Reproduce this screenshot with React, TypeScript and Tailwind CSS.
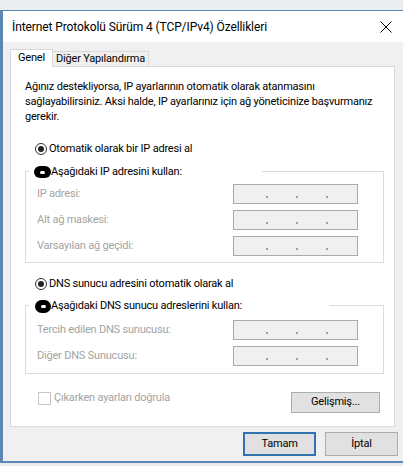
import React from "react";

const font = { fontFamily: 'Roboto, "Noto Sans", sans-serif' };

const IpBox = () => (
    <div className="w-[125px] h-[20px] bg-[#f0f0f0] border border-[#a9a9a9] flex items-end pb-[5px]">
        <div className="w-[2px] h-[2px] bg-[#a0a0a0] ml-[32px]" />
        <div className="w-[2px] h-[2px] bg-[#a0a0a0] ml-[28px]" />
        <div className="w-[2px] h-[2px] bg-[#a0a0a0] ml-[28px]" />
    </div>
);

const FieldRow = ({ label }: { label: string }) => (
    <div className="flex items-center h-[20px]">
        <div className="w-[196px] text-[#a3a3a3] whitespace-nowrap">{label}</div>
        <IpBox />
    </div>
);

const Blob = () => (
    <div className="w-[17px] h-[12px] rounded-full bg-black flex items-center justify-center shrink-0">
        <div className="w-[5px] h-[3px] rounded-full bg-white" />
    </div>
);

const Radio = ({ label }: { label: string }) => (
    <div className="flex items-center h-[16px] ml-[24px]">
        <div className="w-[12px] h-[12px] rounded-full border border-[#333] bg-white flex items-center justify-center">
            <div className="w-[6px] h-[6px] rounded-full bg-[#222]" />
        </div>
        <span className="ml-[2px] text-black whitespace-nowrap">{label}</span>
    </div>
);

const App = () => {
    return (
        <div
            className="w-[403px] h-[466px] bg-[#e8ebee] overflow-hidden text-[11px] tracking-[-0.2px]"
            style={font}
        >
            <div className="h-[10px] bg-[#eaedf0]" />
            <div className="h-[453px] bg-[#f0f0f0] border-t border-b-2 border-l-[3px] border-[#5b87b3] flex flex-col">
                {/* title bar */}
                <div className="h-[31px] bg-white flex items-center justify-between pl-[9px] pr-[10px] shrink-0">
                    <span className="text-[12px] tracking-[-0.1px] text-black whitespace-nowrap">
                        İnternet Protokolü Sürüm 4 (TCP/IPv4) Özellikleri
                    </span>
                    <svg width="12" height="12" viewBox="0 0 12 12" className="mr-[1px]">
                        <path d="M0.5 0.5 L11.5 11.5 M11.5 0.5 L0.5 11.5" stroke="#000" strokeWidth="1" />
                    </svg>
                </div>

                {/* tabs */}
                <div className="flex items-end h-[17px] mt-[7px] ml-[7px] relative z-10 whitespace-nowrap">
                    <div className="w-[43px] h-[18px] -mb-px bg-white border border-b-0 border-[#d9d9d9] flex items-center justify-center text-black">
                        Genel
                    </div>
                    <div className="w-[96px] h-[15px] bg-[#f0f0f0] border border-l-0 border-b-0 border-[#d9d9d9] flex items-center justify-center text-black">
                        Diğer Yapılandırma
                    </div>
                </div>

                {/* panel */}
                <div className="ml-[7px] w-[385px] h-[361px] bg-white border border-[#d9d9d9] flex flex-col">
                    <div className="pl-[14px] pt-[12px] leading-[15px] text-black whitespace-nowrap">
                        <div>Ağınız destekliyorsa, IP ayarlarının otomatik olarak atanmasını</div>
                        <div>sağlayabilirsiniz. Aksi halde, IP ayarlarınız için ağ yöneticinize başvurmanız</div>
                        <div>gerekir.</div>
                    </div>

                    <div className="mt-[17px]">
                        <Radio label="Otomatik olarak bir IP adresi al" />
                    </div>

                    <div className="relative ml-[14px] mt-[14px] w-[359px] border border-[#dcdcdc] pt-[12px] pb-[6px] pl-[11px] flex flex-col gap-[6px]">
                        <div className="absolute -top-[8px] left-[3px] w-[233px] h-[16px] bg-white flex items-center pl-[5px]">
                            <Blob />
                            <span className="text-black whitespace-nowrap">Aşağıdaki IP adresini kullan:</span>
                        </div>
                        <FieldRow label="IP adresi:" />
                        <FieldRow label="Alt ağ maskesi:" />
                        <FieldRow label="Varsayılan ağ geçidi:" />
                    </div>

                    <div className="mt-[13px]">
                        <Radio label="DNS sunucu adresini otomatik olarak al" />
                    </div>

                    <div className="relative ml-[14px] mt-[13px] w-[359px] border border-[#dcdcdc] pt-[14px] pb-[7px] pl-[11px] flex flex-col gap-[6px]">
                        <div className="absolute -top-[8px] left-[3px] w-[300px] h-[16px] bg-white flex items-center pl-[6px]">
                            <div className="w-[16px] h-[13px] rounded-full bg-black flex items-center justify-center shrink-0">
                                <div className="w-[5px] h-[3px] rounded-full bg-white" />
                            </div>
                            <span className="text-black whitespace-nowrap">Aşağıdaki DNS sunucu adreslerini kullan:</span>
                        </div>
                        <FieldRow label="Tercih edilen DNS sunucusu:" />
                        <FieldRow label="Diğer DNS Sunucusu:" />
                    </div>

                    <div className="flex justify-between items-start mt-[18px] pl-[27px] pr-[14px]">
                        <div className="flex items-center h-[13px]">
                            <div className="w-[13px] h-[13px] border border-[#c8c8c8] bg-white" />
                            <span className="ml-[3px] text-[#a3a3a3] whitespace-nowrap">Çıkarken ayarları doğrula</span>
                        </div>
                        <div className="w-[89px] h-[21px] bg-[#e1e1e1] border border-[#adadad] flex items-center justify-center text-black">
                            Gelişmiş...
                        </div>
                    </div>
                </div>

                {/* footer buttons */}
                <div className="flex justify-end gap-[9px] mt-[5px] mr-[5px]">
                    <div className="w-[73px] h-[24px] bg-[#e1e1e1] border-2 border-[#2f73b3] flex items-center justify-center text-black">
                        Tamam
                    </div>
                    <div className="w-[73px] h-[24px] bg-[#e1e1e1] border border-[#adadad] flex items-center justify-center text-black">
                        İptal
                    </div>
                </div>
            </div>
        </div>
    );
};

export default App;
